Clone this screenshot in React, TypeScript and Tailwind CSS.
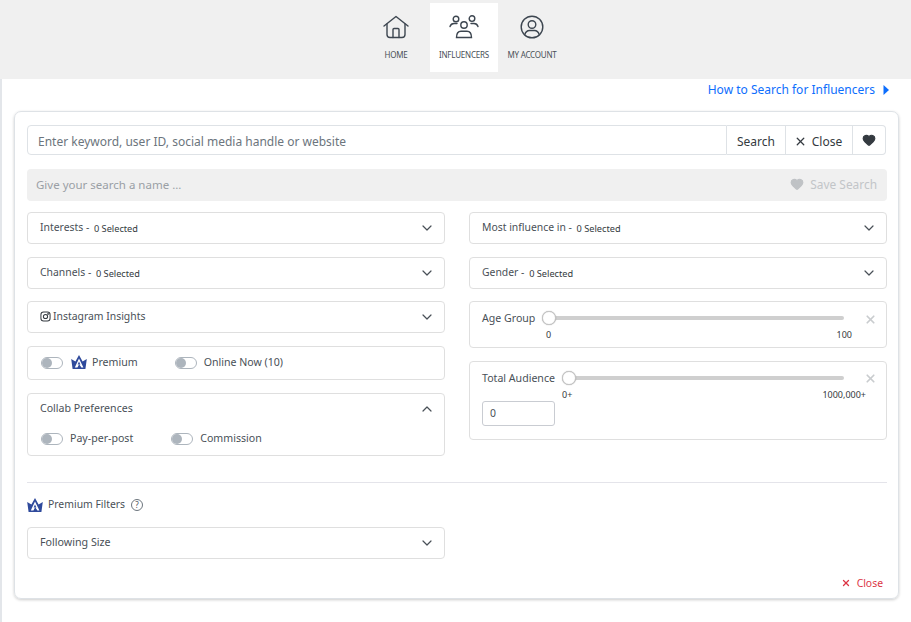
import React from "react";
import { ChevronDown, ChevronUp, X, Heart } from "lucide-react";

function Crown({ className }: { className?: string }) {
  return (
    <svg viewBox="0 0 16 14" className={className}>
      <path d="M0.2 4 L4.4 6.6 L8 0 L11.6 6.6 L15.8 4 L14.4 14 H1.6 Z" fill="#2f4a9c" />
      <path d="M8 3.6 L3.8 12.4 H6.4 L8.2 9.2 L10.4 12.4 H12.4 Z" fill="#fff" />
      <path d="M8 6.6 L6.6 9.6 H9.4 Z" fill="#2f4a9c" />
    </svg>
  );
}

function Toggle() {
  return (
    <span className="block w-[22px] h-[12px] rounded-full border border-[#adb5bd] bg-white relative shrink-0">
      <span className="absolute left-0 top-0 w-[10px] h-[10px] rounded-full bg-[#adb5bd]" />
    </span>
  );
}

function Accordion({ children }: { children: React.ReactNode }) {
  return (
    <div className="h-[32px] border border-[#dfdfdf] rounded-[4px] flex items-center pl-[12px] pr-[9px] justify-between bg-white">
      <div className="text-[10.4px] text-[#495057] flex items-center pb-[1px]">{children}</div>
      <ChevronDown className="w-[16px] h-[16px] text-[#495057]" strokeWidth={1.8} />
    </div>
  );
}

function Sel({ label }: { label: string }) {
  return (
    <>
      <span>{label} -&nbsp;</span>
      <span className="text-[9.2px] text-[#343a40] ml-[2px] mt-[2px]">0 Selected</span>
    </>
  );
}

function NavItem({ label, active, icon }: { label: string; active?: boolean; icon: React.ReactNode }) {
  return (
    <div className={`w-[68px] h-[69px] flex flex-col items-center ${active ? "bg-white" : ""}`}>
      <div className="h-[24px] w-[30px] mt-[12px] flex items-center justify-center">{icon}</div>
      <div className="mt-[10px] text-[8px] leading-[12px] tracking-[-0.2px] text-[#495057] whitespace-nowrap">{label}</div>
    </div>
  );
}

function Track() {
  return (
    <div className="relative h-[16px] mt-[8px] flex items-center">
      <div className="w-full h-[4px] bg-[#cfcfcf] rounded-full" />
      <div className="absolute left-0 top-[1px] w-[14px] h-[14px] rounded-full bg-white border border-[#c5c5c5] shadow-[0_0_1px_rgba(0,0,0,0.4)]" />
    </div>
  );
}

export default function App() {
  return (
    <div className="w-[911px] h-[622px] overflow-hidden bg-white relative" style={{ fontFamily: '"Noto Sans", "Open Sans", sans-serif' }}>
      <div className="h-[79px] bg-[#f0f0f0] flex justify-center pt-[3px] pl-[17px]">
        <NavItem
          label="HOME"
          icon={
            <svg viewBox="0 0 26 24" className="w-[26px] h-[24px]" fill="none" stroke="#3d4650" strokeWidth="1.4" strokeLinejoin="round" strokeLinecap="round">
              <path d="M1 11 L13 1.5 L25 11" />
              <path d="M4 9 V19.5 Q4 22.5 7 22.5 H19 Q22 22.5 22 19.5 V9" />
              <path d="M10 22.5 V14.5 Q10 13.5 11 13.5 H15 Q16 13.5 16 14.5 V22.5" />
            </svg>
          }
        />
        <NavItem
          active
          label="INFLUENCERS"
          icon={
            <svg viewBox="0 0 30 24" className="w-[30px] h-[24px]" fill="none" stroke="#3d4650" strokeWidth="1.4" strokeLinecap="round">
              <circle cx="7" cy="4" r="2.8" />
              <circle cx="23" cy="3.6" r="2.8" />
              <circle cx="15" cy="10" r="3.2" />
              <path d="M1 11.5 Q2 8.5 5 8.5 H8" />
              <path d="M29 11.5 Q28 8.5 25 8.5 H22" />
              <path d="M7.5 22.5 Q7.5 16.2 12 16.2 H18 Q22.5 16.2 22.5 22.5 Z" />
            </svg>
          }
        />
        <NavItem
          label="MY ACCOUNT"
          icon={
            <svg viewBox="0 0 24 24" className="w-[24px] h-[24px]" fill="none" stroke="#3d4650" strokeWidth="1.4" strokeLinecap="round">
              <circle cx="12" cy="12" r="10.8" />
              <circle cx="12" cy="9.5" r="3.8" />
              <path d="M4.8 19.5 Q6 15.5 9.5 15.5 H14.5 Q18 15.5 19.2 19.5" />
            </svg>
          }
        />
      </div>

      <div className="border-l-[2px] border-[#e3e6ea] h-[543px] pl-[12px] pr-[12px]">
        <div className="h-[32px] flex items-center justify-end gap-[8px] pr-[10px] pb-[11px] text-[12px] text-[#0d6efd]">
          <span>How to Search for Influencers</span>
          <svg viewBox="0 0 6 10" className="w-[6px] h-[10px]"><path d="M0.5 0 L6 5 L0.5 10 Z" fill="#0d6efd" /></svg>
        </div>

        <div className="w-[885px] h-[488px] border border-[#dee2e6] rounded-[7px] shadow-[0_1px_3px_rgba(0,0,0,0.2)] px-[12px] pt-[13px]">
          <div className="flex h-[30px] w-[859px]">
            <div className="flex-1 border border-[#dee2e6] rounded-l-[4px] flex items-center pl-[10px] pt-[3px] text-[12px] text-[#6c757d]">
              Enter keyword, user ID, social media handle or website
            </div>
            <div className="w-[59px] border border-l-0 border-[#dee2e6] flex items-center justify-center pt-[3px] text-[12px] text-[#343a40]">Search</div>
            <div className="w-[67px] border border-l-0 border-[#dee2e6] flex items-center justify-center gap-[5px] pt-[3px] text-[12px] text-[#343a40]">
              <X className="w-[13px] h-[13px] -ml-[2px]" strokeWidth={2.4} />
              Close
            </div>
            <div className="w-[33px] border border-l-0 border-[#dee2e6] rounded-r-[4px] flex items-center justify-center">
              <Heart className="w-[14px] h-[14px] text-[#343a40]" fill="#343a40" />
            </div>
          </div>

          <div className="mt-[14px] h-[32px] w-[860px] bg-[#f0f0f0] rounded-[4px] flex items-center justify-between pl-[9px] pr-[10px] pb-[1px] text-[11.5px] text-[#9a9fa5]">
            <span>Give your search a name ...</span>
            <span className="flex items-center gap-[6px] text-[#c2c5c8] text-[11.9px]">
              <Heart className="w-[14px] h-[14px] text-[#bfc2c5]" fill="#bfc2c5" />
              Save Search
            </span>
          </div>

          <div className="mt-[11px] flex gap-[24px] w-[860px] items-start">
            <div className="w-[418px] flex flex-col">
              <Accordion><Sel label="Interests" /></Accordion>
              <div className="h-[13px]" />
              <Accordion><Sel label="Channels" /></Accordion>
              <div className="h-[12px]" />
              <Accordion>
                <svg viewBox="0 0 24 24" className="w-[11px] h-[11px] mr-[2px]" fill="none" stroke="#343a40" strokeWidth="2.2">
                  <rect x="2" y="2" width="20" height="20" rx="6" />
                  <circle cx="12" cy="12" r="4.6" />
                  <circle cx="17.6" cy="6.4" r="0.8" fill="#343a40" />
                </svg>
                Instagram Insights
              </Accordion>
              <div className="mt-[13px] h-[34px] border border-[#dfdfdf] rounded-[4px] flex items-center pl-[13px] text-[10.6px] text-[#495057]">
                <Toggle />
                <Crown className="w-[16px] h-[14px] ml-[8px] mb-[2px]" />
                <span className="ml-[5px]">Premium</span>
                <span className="ml-[37px]"><Toggle /></span>
                <span className="ml-[7px]">Online Now (10)</span>
              </div>
              <div className="mt-[13px] h-[63px] border border-[#dfdfdf] rounded-[4px] pl-[13px] pr-[9px] text-[#495057]">
                <div className="h-[29px] flex items-center justify-between -ml-[1px]">
                  <span className="text-[10.6px]">Collab Preferences</span>
                  <ChevronUp className="w-[16px] h-[16px]" strokeWidth={1.8} />
                </div>
                <div className="flex items-center h-[18px] mt-[7px] text-[10.6px]">
                  <Toggle />
                  <span className="ml-[7px]">Pay-per-post</span>
                  <span className="ml-[38px]"><Toggle /></span>
                  <span className="ml-[7px]">Commission</span>
                </div>
              </div>
            </div>

            <div className="w-[418px] flex flex-col">
              <Accordion><Sel label="Most influence in" /></Accordion>
              <div className="h-[13px]" />
              <Accordion><Sel label="Gender" /></Accordion>
              <div className="h-[12px]" />
              <div className="h-[47px] border border-[#dfdfdf] rounded-[4px] pl-[12px] flex">
                <span className="text-[10.6px] text-[#495057] mt-[9px] w-[60px] shrink-0">Age Group</span>
                <div className="w-[302px]">
                  <Track />
                  <div className="flex justify-between text-[9px] text-[#343a40] mt-[3px] leading-[12px] pl-[4px] -mr-[8px]">
                    <span>0</span><span>100</span>
                  </div>
                </div>
                <X className="w-[13px] h-[13px] ml-[20px] mt-[11px] text-[#c9cccf]" strokeWidth={3.2} />
              </div>
              <div className="mt-[13px] h-[79px] border border-[#dfdfdf] rounded-[4px] pl-[12px]">
                <div className="flex">
                  <span className="text-[10.6px] text-[#495057] mt-[9px] w-[80px] shrink-0 whitespace-nowrap">Total Audience</span>
                  <div className="w-[282px]">
                    <Track />
                    <div className="flex justify-between text-[9px] text-[#343a40] mt-[3px] leading-[12px] -mr-[22px]">
                      <span>0+</span><span>1000,000+</span>
                    </div>
                  </div>
                  <X className="w-[13px] h-[13px] ml-[20px] mt-[10px] text-[#c9cccf]" strokeWidth={3.2} />
                </div>
                <div className="w-[73px] h-[25px] border border-[#c9ccd2] rounded-[3px] flex items-center pl-[7px] text-[10.4px] text-[#495057]">0</div>
              </div>
            </div>
          </div>

          <div className="mt-[26px] h-px w-[860px] bg-[#e4e4ea]" />

          <div className="mt-[14px] h-[16px] flex items-center text-[10.4px] text-[#495057]">
            <Crown className="w-[16px] h-[14px] mb-[1px]" />
            <span className="ml-[5px]">Premium Filters</span>
            <span className="ml-[6px] w-[12px] h-[12px] rounded-full border border-[#6c757d] flex items-center justify-center text-[8px] leading-none">?</span>
          </div>

          <div className="mt-[14px] w-[418px]">
            <Accordion><span className="text-[10.7px]">Following Size</span></Accordion>
          </div>

          <div className="mt-[17px] w-[856px] flex items-center justify-end gap-[6px] text-[10.4px] leading-[14px] text-[#dc3545]">
            <X className="w-[10px] h-[10px]" strokeWidth={3} />
            Close
          </div>
        </div>
      </div>
    </div>
  );
}
